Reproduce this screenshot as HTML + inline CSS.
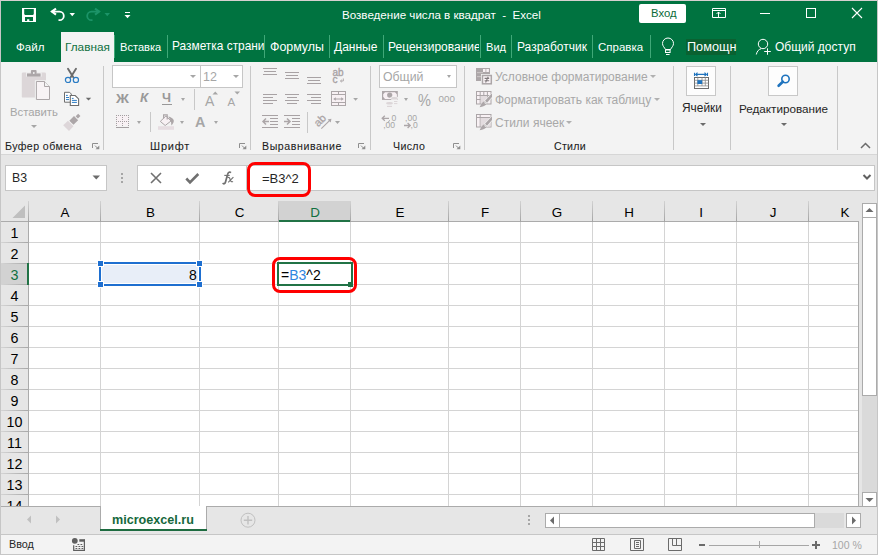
<!DOCTYPE html>
<html><head><meta charset="utf-8">
<style>
*{box-sizing:border-box;margin:0;padding:0}
html,body{width:878px;height:555px;overflow:hidden;background:#fff}
body{position:relative;font-family:"Liberation Sans",sans-serif;font-size:12px;color:#262626}
.a{position:absolute}
.t{position:absolute;white-space:nowrap;line-height:1}
#title{left:0;top:0;width:878px;height:62px;background:#007340;border-top:1px solid #d6d0d0;border-left:1px solid #c6c6c6;border-right:1px solid #c6c6c6}
.wt{color:#fff}
.sep{position:absolute;top:35px;width:1px;height:23px;background:#40a878}
#ribbon{left:0;top:62px;width:878px;height:93px;background:#f3f3f3;border-left:1px solid #c6c6c6;border-right:1px solid #c6c6c6;border-bottom:1px solid #d6d6d6}
.gsep{position:absolute;top:66px;width:1px;height:84px;background:#c8c8c8}
.glab{color:#1c1c1c;font-size:11.3px;-webkit-text-stroke:0.08px #1c1c1c}
.dis{color:#a6a6a6}
.arr{position:absolute;width:0;height:0;border-left:2.5px solid transparent;border-right:2.5px solid transparent;border-top:3px solid #a6a6a6}
#fbar{left:0;top:155px;width:878px;height:47px;background:#e6e6e6;border-left:1px solid #c6c6c6;border-right:1px solid #c6c6c6}
</style></head><body>
<!-- TITLE BAR -->
<div id="title" class="a"></div>
<!-- save icon -->
<svg class="a" style="left:22px;top:8px" width="14" height="14" viewBox="0 0 14 14">
<path fill="#fff" fill-rule="evenodd" d="M0 0H14V14H0Z M2.2 1.1H11.8V6L11 6.9H3L2.2 6Z M3 9.1H11V12.9H7.3V11.3H5.1V12.9H3Z"/>
</svg>
<!-- undo -->
<svg class="a" style="left:48px;top:5px" width="20" height="18" viewBox="0 0 20 18">
<path d="M8 3.6 L3.9 6.6 L8 9.6" fill="none" stroke="#fff" stroke-width="2.1"/>
<path d="M3.6 6.6 H11.5 A4.3 4.3 0 0 1 11.5 15.2 H10.5" fill="none" stroke="#fff" stroke-width="1.8"/>
</svg>
<svg class="a" style="left:69px;top:13px" width="7" height="4" viewBox="0 0 7 4"><path d="M0.5 0 H6 L3.25 3.2Z" fill="#fff"/></svg>
<!-- redo -->
<svg class="a" style="left:83px;top:5px" width="20" height="18" viewBox="0 0 20 18">
<path d="M12 3.6 L16.1 6.6 L12 9.6" fill="none" stroke="#1c9468" stroke-width="2.1"/>
<path d="M16.4 6.6 H8.5 A4.3 4.3 0 0 0 8.5 15.2 H9.5" fill="none" stroke="#1c9468" stroke-width="1.8"/>
</svg>
<svg class="a" style="left:104px;top:13px" width="7" height="4" viewBox="0 0 7 4"><path d="M0.5 0 H6 L3.25 3.2Z" fill="#1c9468"/></svg>
<!-- customize qat -->
<div class="a" style="left:125px;top:12px;width:5px;height:1px;background:#fff"></div>
<svg class="a" style="left:124px;top:15px" width="7" height="4" viewBox="0 0 7 4"><path d="M0.5 0 H6.5 L3.5 3.2Z" fill="#fff"/></svg>
<!-- ribbon display options -->
<svg class="a" style="left:711px;top:7px" width="16" height="12" viewBox="0 0 16 12">
<path d="M1.5 1.5 H14.5 V10.5 H1.5Z M1.5 3.5 H14.5 M7.5 10.5 V5 M5.5 7 L7.5 5 L9.5 7" fill="none" stroke="#fff" stroke-width="1"/>
</svg>
<!-- min max close -->
<div class="a" style="left:760px;top:13px;width:10px;height:1px;background:#fff"></div>
<div class="a" style="left:806px;top:8px;width:10px;height:10px;border:1px solid #fff"></div>
<svg class="a" style="left:851px;top:7px" width="12" height="12" viewBox="0 0 12 12"><path d="M1 1 L11 11 M11 1 L1 11" stroke="#fff" stroke-width="1.1"/></svg>
<!-- bulb -->
<svg class="a" style="left:660px;top:37px" width="16" height="20" viewBox="0 0 16 20">
<path d="M5.5 12.5 C4.5 10.5 2.5 9 2.5 6.5 A5.5 5.5 0 0 1 13.5 6.5 C13.5 9 11.5 10.5 10.5 12.5 Z" fill="none" stroke="#fff" stroke-width="1"/>
<rect x="5.5" y="13" width="4.6" height="2.5" fill="none" stroke="#fff" stroke-width="1"/>
<rect x="6" y="17" width="3.6" height="1" fill="#fff"/>
</svg>
<!-- person -->
<svg class="a" style="left:754px;top:37px" width="20" height="20" viewBox="0 0 20 20">
<circle cx="9" cy="7" r="4.7" fill="none" stroke="#fff" stroke-width="1"/>
<path d="M2.3 17.5 C3 14 5 12.3 7 11.8" fill="none" stroke="#fff" stroke-width="1"/>
<path d="M13.5 11.3 V17.8 M10.2 14.5 H16.8" stroke="#fff" stroke-width="1"/>
</svg>
<div class="t wt" style="left:342px;top:9px;font-size:11.6px">Возведение числа в квадрат &nbsp;- &nbsp;Excel</div>
<div class="a" style="left:639px;top:4px;width:47px;height:19px;background:#fff;border-radius:2px"></div>
<div class="t" style="left:651px;top:8px;color:#0b6b3a;font-size:11.3px">Вход</div>
<!-- tabs -->
<div class="t wt" style="left:16px;top:41.4px;font-size:11.6px">Файл</div>
<div class="a" style="left:61px;top:32px;width:53px;height:30px;background:#f3f3f3"></div>
<div class="t" style="left:65px;top:41.5px;font-size:11.8px;color:#0f7040">Главная</div>
<div class="sep" style="left:114px"></div>
<div class="t wt" style="left:120px;top:41.8px;font-size:11.1px">Вставка</div>
<div class="sep" style="left:167px"></div>
<div class="t wt" style="left:172px;top:41px;font-size:11.9px">Разметка страни</div>
<div class="sep" style="left:264px"></div>
<div class="t wt" style="left:270px;top:40.7px;font-size:12.4px">Формулы</div>
<div class="sep" style="left:329px"></div>
<div class="t wt" style="left:334px;top:41px">Данные</div>
<div class="sep" style="left:383px"></div>
<div class="t wt" style="left:388px;top:41px;width:91px;overflow:hidden">Рецензирование</div>
<div class="sep" style="left:480px"></div>
<div class="t wt" style="left:486px;top:41.8px;font-size:11.1px">Вид</div>
<div class="sep" style="left:511px"></div>
<div class="t wt" style="left:517px;top:41px">Разработчик</div>
<div class="sep" style="left:592px"></div>
<div class="t wt" style="left:598px;top:41.5px;font-size:11.5px">Справка</div>
<div class="sep" style="left:650px"></div>
<div class="a" style="left:686px;top:39px;width:50px;height:16px;background:#0a6131"></div>
<div class="t wt" style="left:687px;top:41px;font-size:12.7px">Помощн</div>
<div class="t wt" style="left:775px;top:41px">Общий доступ</div>

<!-- RIBBON -->
<div id="ribbon" class="a"></div>

<!-- clipboard group -->
<svg class="a" style="left:20px;top:68px" width="32" height="34" viewBox="0 0 32 34">
<rect x="1.8" y="4.6" width="24.2" height="25" rx="1.2" fill="#dcd6d8"/>
<rect x="6" y="4.4" width="15.6" height="4.2" fill="#f3f3f3"/>
<rect x="6.9" y="5.4" width="13.7" height="3.2" fill="#aca6a8"/>
<rect x="10.9" y="2.1" width="5.7" height="4" rx="1" fill="#aca6a8"/>
<circle cx="13.8" cy="5" r="0.9" fill="#f3f3f3"/>
<path d="M14.9 12.2 H25.5 L31 17.5 V32.9 H14.9Z" fill="#f3f3f3"/>
<path d="M16.4 13.5 H24.5 L29.5 18.5 V31.5 H16.4Z" fill="#f8f3f5" stroke="#aca6a8" stroke-width="1"/>
<path d="M24.5 13.5 V18.5 H29.5" fill="#f3f3f3" stroke="#aca6a8" stroke-width="1"/>
</svg>
<div class="t dis" style="left:10px;top:106.5px;font-size:11.3px;color:#a6a6a6">Вставить</div>
<div class="arr" style="left:31px;top:125px;border-left-width:3px;border-right-width:3px;border-top-width:3px"></div>
<!-- cut -->
<svg class="a" style="left:63px;top:66px" width="18" height="18" viewBox="0 0 18 18">
<path d="M5 2.8 L10.3 11.3 M13 2.8 L7.7 11.3" stroke="#6b6b6b" stroke-width="1.9" stroke-linecap="round"/>
<circle cx="5" cy="13.9" r="2.6" fill="#f3f3f3" stroke="#2b7cc4" stroke-width="1.2"/>
<circle cx="12.9" cy="13.9" r="2.6" fill="#f3f3f3" stroke="#2b7cc4" stroke-width="1.2"/>
</svg>
<!-- copy -->
<svg class="a" style="left:63px;top:91px" width="18" height="17" viewBox="0 0 18 17">
<path d="M1.5 1.3 H6.6 L8.3 3 V11.2 H1.5Z" fill="#fff" stroke="#6d6d6d" stroke-width="1"/>
<path d="M3 4.4 H4.8 M3 6.5 H6 M3 8.6 H6" stroke="#2b7cc4" stroke-width="1"/>
<path d="M7.3 4.5 H12.2 L15.6 7.9 V14.5 H7.3Z" fill="#fff" stroke="#6d6d6d" stroke-width="1.1"/>
<path d="M8.9 7.4 H10.6 M8.9 9.4 H13.9 M8.9 11.4 H13.9" stroke="#2b7cc4" stroke-width="1"/>
</svg>
<svg class="a" style="left:85px;top:97px" width="7" height="4" viewBox="0 0 7 4"><path d="M0.8 0.8 H6.2 L3.5 3.6Z" fill="#6b6b6b"/></svg>
<!-- format painter -->
<svg class="a" style="left:61px;top:112px" width="22" height="20" viewBox="0 0 22 20">
<g transform="translate(11.6,9.6) rotate(45)">
<rect x="-1.6" y="-9.5" width="3.2" height="3.6" fill="#aca6a8"/>
<rect x="-2.9" y="-4.9" width="5.8" height="6.6" fill="#aca6a8"/>
<path d="M-3.9 2.7 H3.9 L4.1 9.2 H-4.1Z" fill="#ddd6d9"/>
</g>
</svg>
<div class="t glab" style="left:5px;top:141.3px;font-size:10.6px;letter-spacing:0.42px">Буфер обмена</div>
<svg class="a" style="left:91px;top:142px" width="10" height="10" viewBox="0 0 10 10"><path d="M1.5 6 V1.5 H7" fill="none" stroke="#8e8e8e" stroke-width="1"/><path d="M8.3 3.5 V7.3 H4.5Z" fill="#8e8e8e"/><path d="M4 3.6 L6.5 6.1" stroke="#8e8e8e" stroke-width="1"/></svg>
<div class="gsep" style="left:103px"></div>
<!-- font group -->
<div class="a" style="left:112px;top:65px;width:89px;height:23px;background:#fff;border:1px solid #c6c6c6"></div>
<div class="a" style="left:200px;top:65px;width:43px;height:23px;background:#fff;border:1px solid #c6c6c6"></div>
<div class="arr" style="left:190px;top:75px;border-left-width:3px;border-right-width:3px;border-top-width:3px"></div>
<div class="t" style="left:203px;top:71px;font-size:12.5px;color:#a6a6a6">12</div>
<div class="arr" style="left:233px;top:75px;border-left-width:3px;border-right-width:3px;border-top-width:3px"></div>
<div class="t" style="left:116px;top:92px;font-size:13px;font-weight:700;color:#999;transform:scaleX(1.1);transform-origin:0 0">Ж</div>
<div class="t" style="left:140px;top:91.3px;font-size:13.4px;font-weight:700;font-style:italic;color:#999">К</div>
<div class="t" style="left:162px;top:91.5px;font-size:12.8px;font-weight:700;color:#999">Ч</div>
<div class="a" style="left:162px;top:104px;width:10px;height:1px;background:#999"></div>
<div class="arr" style="left:181px;top:98px;border-left-width:2.5px;border-right-width:2.5px;border-top-width:3px"></div>
<div class="a" style="left:194px;top:89px;width:1px;height:21px;background:#c8c8c8"></div>
<div class="t" style="left:205px;top:94px;font-size:14px;color:#a6a6a6">A</div>
<svg class="a" style="left:212px;top:91px" width="7" height="4" viewBox="0 0 7 4"><path d="M0.5 3.5 H6 L3.25 0.5Z" fill="#a6a6a6"/></svg>
<div class="t" style="left:227.5px;top:96.5px;font-size:11.5px;color:#a6a6a6">A</div>
<svg class="a" style="left:234px;top:91px" width="7" height="4" viewBox="0 0 7 4"><path d="M0.5 0.5 H6 L3.25 3.5Z" fill="#a6a6a6"/></svg>
<!-- borders -->
<svg class="a" style="left:115px;top:114px" width="16" height="16" viewBox="0 0 16 16">
<rect x="1.4" y="1.5" width="12" height="10" fill="#f8f1f4"/>
<g fill="#a49fa1">
<rect x="1" y="1" width="1" height="1"/><rect x="3" y="1" width="1" height="1"/><rect x="5" y="1" width="1" height="1"/><rect x="7" y="1" width="1" height="1"/><rect x="9" y="1" width="1" height="1"/><rect x="11" y="1" width="1" height="1"/><rect x="13" y="1" width="1" height="1"/>
<rect x="1" y="7" width="1" height="1"/><rect x="3" y="7" width="1" height="1"/><rect x="5" y="7" width="1" height="1"/><rect x="7" y="7" width="1" height="1"/><rect x="9" y="7" width="1" height="1"/><rect x="11" y="7" width="1" height="1"/><rect x="13" y="7" width="1" height="1"/>
<rect x="1" y="3" width="1" height="1"/><rect x="1" y="5" width="1" height="1"/><rect x="1" y="9" width="1" height="1"/><rect x="1" y="11" width="1" height="1"/>
<rect x="7" y="3" width="1" height="1"/><rect x="7" y="5" width="1" height="1"/><rect x="7" y="9" width="1" height="1"/><rect x="7" y="11" width="1" height="1"/>
<rect x="13" y="3" width="1" height="1"/><rect x="13" y="5" width="1" height="1"/><rect x="13" y="9" width="1" height="1"/><rect x="13" y="11" width="1" height="1"/>
<rect x="1" y="13" width="13" height="1"/>
</g>
</svg>
<div class="arr" style="left:137px;top:121px;border-left-width:2.5px;border-right-width:2.5px;border-top-width:3px"></div>
<div class="a" style="left:150px;top:112px;width:1px;height:20px;background:#c8c8c8"></div>
<!-- fill color -->
<svg class="a" style="left:157px;top:113px" width="18" height="18" viewBox="0 0 18 18">
<path d="M3.3 8.4 L9 2.9 L14 8 L8.2 12.5Z" fill="#f8f1f4" stroke="#aca6a8" stroke-width="1"/>
<path d="M6.6 5.6 V1.9 H10.2 V6.6" fill="none" stroke="#aca6a8" stroke-width="1.2"/>
<path d="M11.3 3.6 C13.8 4.2 16.3 5.4 16.8 7.6 C17 9.6 15.5 11.5 14.4 12.4 L13.9 7.9Z" fill="#aca6a8"/>
<rect x="1" y="13.2" width="16" height="3.6" fill="#e6dde1"/>
</svg>
<div class="arr" style="left:180px;top:121px;border-left-width:2.5px;border-right-width:2.5px;border-top-width:3px"></div>
<div class="t" style="left:195px;top:115px;font-size:14.4px;font-weight:700;color:#a6a6a6">A</div>
<div class="arr" style="left:214px;top:121px;border-left-width:2.5px;border-right-width:2.5px;border-top-width:3px"></div>
<div class="t glab" style="left:150px;top:141px;font-size:11px;letter-spacing:0.8px">Шрифт</div>
<svg class="a" style="left:238px;top:142px" width="10" height="10" viewBox="0 0 10 10"><path d="M1.5 6 V1.5 H7" fill="none" stroke="#8e8e8e" stroke-width="1"/><path d="M8.3 3.5 V7.3 H4.5Z" fill="#8e8e8e"/><path d="M4 3.6 L6.5 6.1" stroke="#8e8e8e" stroke-width="1"/></svg>
<div class="gsep" style="left:250px"></div>
<!-- alignment group -->
<svg class="a" style="left:258px;top:64px" width="112" height="70" viewBox="0 0 112 70">
<g fill="#a8a2a4">
<rect x="5" y="4" width="14" height="1"/><rect x="6" y="7" width="12" height="1"/><rect x="5" y="10" width="14" height="1"/>
<rect x="27" y="8" width="14" height="1"/><rect x="28" y="11" width="12" height="1"/><rect x="27" y="14" width="14" height="1"/>
<rect x="49" y="13" width="14" height="1"/><rect x="50" y="16" width="12" height="1"/><rect x="49" y="19" width="14" height="1"/>
<rect x="5" y="30" width="14" height="1"/><rect x="5" y="33" width="10" height="1"/><rect x="5" y="36" width="14" height="1"/><rect x="5" y="39" width="10" height="1"/>
<rect x="27" y="30" width="14" height="1"/><rect x="29" y="33" width="10" height="1"/><rect x="27" y="36" width="14" height="1"/><rect x="29" y="39" width="10" height="1"/>
<rect x="49" y="30" width="14" height="1"/><rect x="53" y="33" width="10" height="1"/><rect x="49" y="36" width="14" height="1"/><rect x="53" y="39" width="10" height="1"/>
<!-- indent -->
<rect x="4" y="51" width="16" height="1"/><rect x="12" y="54" width="8" height="1"/><rect x="12" y="57" width="8" height="1"/><rect x="12" y="60" width="8" height="1"/><rect x="4" y="63" width="16" height="1"/>
<rect x="26" y="51" width="16" height="1"/><rect x="34" y="54" width="8" height="1"/><rect x="34" y="57" width="8" height="1"/><rect x="34" y="60" width="8" height="1"/><rect x="26" y="63" width="16" height="1"/>
</g>
<rect x="49" y="48" width="1" height="21" fill="#c8c8c8"/>
<path d="M5 57.5 H11 M8 54.5 L5 57.5 L8 60.5" fill="none" stroke="#aca6a8" stroke-width="1.5"/>
<path d="M26 57.5 H32 M29 54.5 L32 57.5 L29 60.5" fill="none" stroke="#aca6a8" stroke-width="1.5"/>
<!-- wrap -->
<text x="74.4" y="11.8" font-family="Liberation Sans" font-size="10" fill="#a8a2a4" stroke="#a8a2a4" stroke-width="0.35">ab</text>
<text x="74.6" y="18.8" font-family="Liberation Sans" font-size="10" fill="#a8a2a4" stroke="#a8a2a4" stroke-width="0.35">c</text>
<path d="M85.3 14.5 V17 H82.5 M83.8 15.8 L82.5 17 L83.8 18.2" fill="none" stroke="#a8a2a4" stroke-width="0.9"/>
<!-- merge -->
<rect x="73.5" y="27.5" width="14" height="14" fill="#f8f1f4" stroke="#aca6a8" stroke-width="1"/>
<path d="M73.5 30.5 H87.5 M73.5 38.5 H87.5 M80.5 27.5 V30.5 M80.5 38.5 V41.5" fill="none" stroke="#aca6a8" stroke-width="1"/>
<path d="M77 35 H84" stroke="#aca6a8" stroke-width="1"/>
<path d="M75.2 35 L77.8 33.2 V36.8Z M85.8 35 L83.2 33.2 V36.8Z" fill="#aca6a8"/>
<path d="M95.2 34 H100 L97.6 36.8Z" fill="#a6a6a6"/>
<!-- orientation -->
<text x="0" y="0" font-family="Liberation Sans" font-size="10.8" fill="#aca6a8" stroke="#aca6a8" stroke-width="0.3" transform="translate(60.2,63.2) rotate(-45)">ab</text>
<path d="M63.3 64.6 L72.8 55.3" fill="none" stroke="#aca6a8" stroke-width="1.1"/>
<path d="M73.4 54.7 L69.6 55.4 L72.7 58.5Z" fill="#aca6a8"/>
<path d="M77 57 H82 L79.5 60Z" fill="#a6a6a6"/>
</svg>
<div class="t glab" style="left:262px;top:141.3px;font-size:10.6px;letter-spacing:0.59px">Выравнивание</div>
<svg class="a" style="left:357px;top:142px" width="10" height="10" viewBox="0 0 10 10"><path d="M1.5 6 V1.5 H7" fill="none" stroke="#8e8e8e" stroke-width="1"/><path d="M8.3 3.5 V7.3 H4.5Z" fill="#8e8e8e"/><path d="M4 3.6 L6.5 6.1" stroke="#8e8e8e" stroke-width="1"/></svg>
<div class="gsep" style="left:370px"></div>
<!-- number group -->
<div class="a" style="left:379px;top:65px;width:78px;height:23px;background:#fff;border:1px solid #c6c6c6"></div>
<div class="t" style="left:383px;top:71px;font-size:12.3px;color:#a6a6a6">Общий</div>
<div class="arr" style="left:447px;top:75px;border-left-width:2.5px;border-right-width:2.5px;border-top-width:3px"></div>
<svg class="a" style="left:381px;top:90px" width="20" height="19" viewBox="0 0 20 19">
<rect x="1" y="1" width="15.8" height="8.9" fill="#aca6a8"/>
<path d="M2.2 4.2 L4 2.3 H14 L15.9 4.2 V6.8 L14 8.9 H4 L2.2 6.8Z" fill="#f8f1f4"/>
<circle cx="8.7" cy="5.1" r="2.6" fill="#aca6a8"/>
<ellipse cx="13.4" cy="8.2" rx="3.9" ry="1.9" fill="#f3f3f3"/>
<ellipse cx="13.4" cy="8.2" rx="3.4" ry="1.3" fill="#dcd6d8"/>
<path d="M13 11.5 H16.4 M13 13.6 H16.4" stroke="#dcd6d8" stroke-width="1"/>
<ellipse cx="8.5" cy="13.3" rx="3.4" ry="1.3" fill="#dcd6d8"/>
<path d="M6 16.4 H11" stroke="#dcd6d8" stroke-width="1.2"/>
</svg>
<div class="arr" style="left:404px;top:98px;border-left-width:2.5px;border-right-width:2.5px;border-top-width:3px"></div>
<div class="t" style="left:418px;top:91.5px;font-size:16.5px;color:#a6a6a6;transform:scaleX(0.88);transform-origin:0 0">%</div>
<div class="t" style="left:438.5px;top:94px;font-size:9.8px;color:#a6a6a6;letter-spacing:0.1px">000</div>
<svg class="a" style="left:380px;top:113px" width="42" height="18" viewBox="0 0 42 18">
<path d="M2.2 5.3 H9 M4.8 2.8 L2.2 5.3 L4.8 7.8" fill="none" stroke="#aca6a8" stroke-width="1.3"/>
<text x="11.4" y="8" font-family="Liberation Sans" font-size="8.6" fill="#a6a6a6">0</text>
<text x="3.2" y="15" font-family="Liberation Sans" font-size="8.6" fill="#a6a6a6">,00</text>
<path d="M9.6 7.2 L8.4 9.2" stroke="#a6a6a6" stroke-width="1"/>
<text x="25" y="8" font-family="Liberation Sans" font-size="8.6" fill="#a6a6a6">,00</text>
<path d="M24 12.5 H30 M27.6 10 L30.2 12.5 L27.6 15" fill="none" stroke="#aca6a8" stroke-width="1.3"/>
<text x="30.6" y="15" font-family="Liberation Sans" font-size="8.6" fill="#a6a6a6">,0</text>
</svg>
<div class="t glab" style="left:393px;top:141.3px;font-size:10.6px;letter-spacing:0.35px">Число</div>
<svg class="a" style="left:452px;top:142px" width="10" height="10" viewBox="0 0 10 10"><path d="M1.5 6 V1.5 H7" fill="none" stroke="#8e8e8e" stroke-width="1"/><path d="M8.3 3.5 V7.3 H4.5Z" fill="#8e8e8e"/><path d="M4 3.6 L6.5 6.1" stroke="#8e8e8e" stroke-width="1"/></svg>
<div class="gsep" style="left:464px"></div>
<!-- styles group -->
<svg class="a" style="left:475px;top:67px" width="18" height="18" viewBox="0 0 18 18">
<rect x="1" y="1" width="14" height="13" fill="#aca6a8"/>
<rect x="8" y="2" width="2.5" height="3" fill="#f8f1f4"/><rect x="11.3" y="2" width="2.6" height="3" fill="#f8f1f4"/>
<rect x="2" y="5.4" width="6" height="0.7" fill="#dcd6d8"/><rect x="2" y="9.4" width="6" height="0.7" fill="#dcd6d8"/>
<rect x="6" y="7" width="12" height="11" fill="#f3f3f3"/>
<rect x="7.5" y="8.5" width="8.8" height="8.3" fill="#faf3f6" stroke="#aca6a8" stroke-width="1.5"/>
<path d="M9.6 11.4 H14.2 M9.6 13.8 H14.2 M13.2 9.8 L10.6 15.4" stroke="#7f797b" stroke-width="1.1"/>
</svg>
<div class="t" style="left:495px;top:71px;font-size:12px;color:#a8a8a8">Условное форматирование</div>
<div class="arr" style="left:650px;top:75px;border-left-width:3px;border-right-width:3px;border-top-width:3px;border-top-color:#b0b0b0"></div>
<svg class="a" style="left:475px;top:90px" width="18" height="18" viewBox="0 0 18 18">
<rect x="1.5" y="1.5" width="14.5" height="12.5" fill="#f8f1f4" stroke="#aca6a8" stroke-width="1"/>
<path d="M1.5 5.5 H16 M1.5 9.5 H16 M5.2 1.5 V14 M8.8 1.5 V14 M12.4 1.5 V14" stroke="#aca6a8" stroke-width="1"/>
<rect x="5.7" y="6" width="6.2" height="7.5" fill="#e3dcdf"/>
<path d="M17.5 2 L8.5 11.5 L11.5 14.5 L17.5 7.5Z" fill="#f3f3f3"/>
<path d="M17 3.2 L10 10.8 L12 12.8 L17 7Z" fill="#aca6a8"/>
<path d="M9.2 11.3 C7.5 12 6.3 14.2 4.6 17.3 C8 17 10.6 15.6 11.8 13.8Z" fill="#aca6a8"/>
<path d="M9.3 12.6 C10 12.6 10.6 13.2 10.6 13.9" fill="none" stroke="#f3f3f3" stroke-width="0.8"/>
</svg>
<div class="t" style="left:495px;top:94px;font-size:12px;color:#a8a8a8">Форматировать как таблицу</div>
<div class="arr" style="left:654px;top:98px;border-left-width:3px;border-right-width:3px;border-top-width:3px;border-top-color:#b0b0b0"></div>
<svg class="a" style="left:475px;top:113px" width="18" height="18" viewBox="0 0 18 18">
<rect x="1.5" y="1.5" width="14.5" height="12.5" fill="#f8f1f4" stroke="#aca6a8" stroke-width="1"/>
<path d="M1.5 4.5 H16 M5.2 1.5 V14" stroke="#aca6a8" stroke-width="1"/>
<rect x="5.7" y="5" width="10" height="8.5" fill="#e3dcdf"/>
<path d="M17.5 2 L8.5 11.5 L11.5 14.5 L17.5 7.5Z" fill="#f3f3f3"/>
<path d="M17 3.2 L10 10.8 L12 12.8 L17 7Z" fill="#aca6a8"/>
<path d="M9.2 11.3 C7.5 12 6.3 14.2 4.6 17.3 C8 17 10.6 15.6 11.8 13.8Z" fill="#aca6a8"/>
<path d="M9.3 12.6 C10 12.6 10.6 13.2 10.6 13.9" fill="none" stroke="#f3f3f3" stroke-width="0.8"/>
</svg>
<div class="t" style="left:495px;top:117px;font-size:12px;color:#a8a8a8">Стили ячеек</div>
<div class="arr" style="left:566px;top:121px;border-left-width:3px;border-right-width:3px;border-top-width:3px;border-top-color:#b0b0b0"></div>
<div class="t glab" style="left:554px;top:141.3px;font-size:10.6px;letter-spacing:0.3px">Стили</div>
<div class="gsep" style="left:673px"></div>
<!-- cells -->
<div class="a" style="left:686px;top:66px;width:30px;height:30px;background:#fdfdfd;border:1px solid #c8c8c8"></div>
<svg class="a" style="left:692px;top:71px" width="18" height="20" viewBox="0 0 18 20">
<path d="M2.5 1.8 V5 M15.5 1.8 V5 M3.5 3.4 H14.5 M5.5 1.6 L3.6 3.4 L5.5 5.2 M12.5 1.6 L14.4 3.4 L12.5 5.2" fill="none" stroke="#1e73be" stroke-width="1.1"/>
<rect x="2.5" y="6.5" width="14" height="11" fill="#fff" stroke="#6d6d6d" stroke-width="1"/>
<path d="M2.5 9.3 H16.5 M2.5 12.1 H16.5 M2.5 14.9 H16.5 M5.8 6.5 V14.9 M10 6.5 V14.9 M13.3 6.5 V14.9" stroke="#8a8a8a" stroke-width="0.8"/>
<rect x="5.4" y="9.2" width="4.8" height="3.8" fill="#1e73be"/>
</svg>
<div class="t" style="left:682px;top:103px;font-size:11.9px;color:#262626">Ячейки</div>
<div class="arr" style="left:700px;top:123px;border-left-width:3px;border-right-width:3px;border-top-width:3px;border-top-color:#6b6b6b"></div>
<div class="gsep" style="left:730px"></div>
<!-- editing -->
<div class="a" style="left:768px;top:66px;width:30px;height:30px;background:#fdfdfd;border:1px solid #c8c8c8"></div>
<svg class="a" style="left:776px;top:73px" width="16" height="16" viewBox="0 0 16 16">
<circle cx="9.5" cy="6" r="3.7" fill="none" stroke="#1e73be" stroke-width="1.6"/>
<path d="M6.8 8.7 L2.6 12.8" stroke="#1e73be" stroke-width="2.6" stroke-linecap="round"/>
</svg>
<div class="t" style="left:739px;top:103px;font-size:11.7px;color:#262626">Редактирование</div>
<div class="arr" style="left:781px;top:123px;border-left-width:3px;border-right-width:3px;border-top-width:3px;border-top-color:#6b6b6b"></div>
<div class="gsep" style="left:837px"></div>
<svg class="a" style="left:860px;top:142px" width="11" height="7" viewBox="0 0 11 7"><path d="M1 6 L5.5 1.5 L10 6" fill="none" stroke="#6b6b6b" stroke-width="1.5"/></svg>
<!-- FORMULA BAR AREA -->
<div id="fbar" class="a"></div>

<!-- FORMULA BAR -->
<div class="a" style="left:5px;top:165px;width:102px;height:26px;background:#fff;border:1px solid #c6c6c6"></div>
<div class="t" style="left:12px;top:172px;font-size:12.3px;color:#262626">B3</div>
<svg class="a" style="left:92px;top:175px" width="9" height="5" viewBox="0 0 9 5"><path d="M0.5 0.5 H8 L4.25 4.5Z" fill="#6b6b6b"/></svg>
<div class="a" style="left:121px;top:173px;width:2px;height:2px;background:#a6a6a6"></div>
<div class="a" style="left:121px;top:177px;width:2px;height:2px;background:#a6a6a6"></div>
<div class="a" style="left:121px;top:181px;width:2px;height:2px;background:#a6a6a6"></div>
<div class="a" style="left:137px;top:165px;width:110px;height:26px;background:#fff;border:1px solid #c6c6c6"></div>
<div class="a" style="left:246px;top:165px;width:629px;height:26px;background:#fff;border:1px solid #c6c6c6"></div>
<svg class="a" style="left:149px;top:172px" width="14" height="12" viewBox="0 0 14 12"><path d="M2 1 L12 11 M12 1 L2 11" stroke="#707070" stroke-width="1.6"/></svg>
<svg class="a" style="left:184px;top:172px" width="16" height="13" viewBox="0 0 16 13"><path d="M2.3 6.5 L6 10.3 L14.3 2" fill="none" stroke="#707070" stroke-width="2.6"/></svg>
<svg class="a" style="left:220px;top:170px" width="16" height="16" viewBox="0 0 16 16">
<path d="M11 2.6 C9.8 1.7 8.2 2 7.6 4.4 L5.5 12 C5 13.9 3.7 14.2 2.6 13.2" fill="none" stroke="#707070" stroke-width="1.75"/>
<path d="M4.3 5.4 H9.7" stroke="#707070" stroke-width="1.1"/>
<path d="M7.4 7.6 C8.6 6.9 9.6 7.4 10.1 9.3 C10.6 11.5 11.6 12.3 13 11.4" fill="none" stroke="#707070" stroke-width="1.2"/>
<path d="M13.4 7.2 L8.2 12.3" stroke="#707070" stroke-width="1.1"/>
</svg>
<div class="t" style="left:262px;top:172px;font-size:13px;color:#262626">=B3^2</div>
<svg class="a" style="left:862px;top:173px" width="10" height="8" viewBox="0 0 10 8"><path d="M1.5 2 L5 5.5 L8.5 2" fill="none" stroke="#606060" stroke-width="2"/></svg>
<!-- red annotation 1 -->
<div class="a" style="left:247px;top:162px;width:64px;height:35px;border:3.2px solid #ff0000;border-radius:8px"></div>

<!-- GRID -->
<div class="a" style="left:0;top:201px;width:878px;height:306px;background:#fff"></div>
<div class="a" style="left:1px;top:201px;width:858px;height:21px;background:#e6e6e6;border-bottom:1px solid #ababab"></div>
<div class="a" style="left:1px;top:222px;width:27px;height:285px;background:#e6e6e6"></div>
<div class="a" style="left:0;top:154px;width:1px;height:401px;background:#c6c6c6"></div>
<svg class="a" style="left:12px;top:205px" width="14" height="14" viewBox="0 0 14 14"><path d="M13 0.5 V13 H0.5Z" fill="#bfbfbf"/></svg>

<div class="a" style="left:278px;top:201px;width:72px;height:21px;background:#d2d2d2"></div>
<div class="a" style="left:278px;top:220px;width:73px;height:2px;background:#217346"></div>
<div class="a" style="left:28px;top:201px;width:1px;height:21px;background:linear-gradient(#d2d2d2,#a3a3a3)"></div>
<div class="a" style="left:100px;top:201px;width:1px;height:21px;background:linear-gradient(#d2d2d2,#a3a3a3)"></div>
<div class="a" style="left:199px;top:201px;width:1px;height:21px;background:linear-gradient(#d2d2d2,#a3a3a3)"></div>
<div class="a" style="left:278px;top:201px;width:1px;height:21px;background:linear-gradient(#d2d2d2,#a3a3a3)"></div>
<div class="a" style="left:350px;top:201px;width:1px;height:21px;background:linear-gradient(#d2d2d2,#a3a3a3)"></div>
<div class="a" style="left:448px;top:201px;width:1px;height:21px;background:linear-gradient(#d2d2d2,#a3a3a3)"></div>
<div class="a" style="left:520px;top:201px;width:1px;height:21px;background:linear-gradient(#d2d2d2,#a3a3a3)"></div>
<div class="a" style="left:592px;top:201px;width:1px;height:21px;background:linear-gradient(#d2d2d2,#a3a3a3)"></div>
<div class="a" style="left:664px;top:201px;width:1px;height:21px;background:linear-gradient(#d2d2d2,#a3a3a3)"></div>
<div class="a" style="left:736px;top:201px;width:1px;height:21px;background:linear-gradient(#d2d2d2,#a3a3a3)"></div>
<div class="a" style="left:808px;top:201px;width:1px;height:21px;background:linear-gradient(#d2d2d2,#a3a3a3)"></div>
<div class="t" style="left:28px;top:206px;width:72px;padding-left:2px;text-align:center;font-size:13.4px;color:#000">A</div>
<div class="t" style="left:100px;top:206px;width:99px;padding-left:2px;text-align:center;font-size:13.4px;color:#000">B</div>
<div class="t" style="left:199px;top:206px;width:79px;padding-left:2px;text-align:center;font-size:13.4px;color:#000">C</div>
<div class="t" style="left:278px;top:206px;width:72px;padding-left:2px;text-align:center;font-size:13.4px;color:#107040">D</div>
<div class="t" style="left:350px;top:206px;width:98px;padding-left:2px;text-align:center;font-size:13.4px;color:#000">E</div>
<div class="t" style="left:448px;top:206px;width:72px;padding-left:2px;text-align:center;font-size:13.4px;color:#000">F</div>
<div class="t" style="left:520px;top:206px;width:72px;padding-left:2px;text-align:center;font-size:13.4px;color:#000">G</div>
<div class="t" style="left:592px;top:206px;width:72px;padding-left:2px;text-align:center;font-size:13.4px;color:#000">H</div>
<div class="t" style="left:664px;top:206px;width:72px;padding-left:2px;text-align:center;font-size:13.4px;color:#000">I</div>
<div class="t" style="left:736px;top:206px;width:72px;padding-left:2px;text-align:center;font-size:13.4px;color:#000">J</div>
<div class="t" style="left:808px;top:206px;width:72px;padding-left:2px;text-align:center;font-size:13.4px;color:#000">K</div>
<div class="a" style="left:100px;top:222px;width:1px;height:285px;background:#d4d4d4"></div>
<div class="a" style="left:199px;top:222px;width:1px;height:285px;background:#d4d4d4"></div>
<div class="a" style="left:278px;top:222px;width:1px;height:285px;background:#d4d4d4"></div>
<div class="a" style="left:350px;top:222px;width:1px;height:285px;background:#d4d4d4"></div>
<div class="a" style="left:448px;top:222px;width:1px;height:285px;background:#d4d4d4"></div>
<div class="a" style="left:520px;top:222px;width:1px;height:285px;background:#d4d4d4"></div>
<div class="a" style="left:592px;top:222px;width:1px;height:285px;background:#d4d4d4"></div>
<div class="a" style="left:664px;top:222px;width:1px;height:285px;background:#d4d4d4"></div>
<div class="a" style="left:736px;top:222px;width:1px;height:285px;background:#d4d4d4"></div>
<div class="a" style="left:808px;top:222px;width:1px;height:285px;background:#d4d4d4"></div>
<div class="a" style="left:29px;top:242px;width:830px;height:1px;background:#d4d4d4"></div>
<div class="a" style="left:1px;top:242px;width:27px;height:1px;background:linear-gradient(to right,#d4d4d4,#a8a8a8)"></div>
<div class="a" style="left:29px;top:263px;width:830px;height:1px;background:#d4d4d4"></div>
<div class="a" style="left:1px;top:263px;width:27px;height:1px;background:linear-gradient(to right,#d4d4d4,#a8a8a8)"></div>
<div class="a" style="left:29px;top:284px;width:830px;height:1px;background:#d4d4d4"></div>
<div class="a" style="left:1px;top:284px;width:27px;height:1px;background:linear-gradient(to right,#d4d4d4,#a8a8a8)"></div>
<div class="a" style="left:29px;top:305px;width:830px;height:1px;background:#d4d4d4"></div>
<div class="a" style="left:1px;top:305px;width:27px;height:1px;background:linear-gradient(to right,#d4d4d4,#a8a8a8)"></div>
<div class="a" style="left:29px;top:326px;width:830px;height:1px;background:#d4d4d4"></div>
<div class="a" style="left:1px;top:326px;width:27px;height:1px;background:linear-gradient(to right,#d4d4d4,#a8a8a8)"></div>
<div class="a" style="left:29px;top:347px;width:830px;height:1px;background:#d4d4d4"></div>
<div class="a" style="left:1px;top:347px;width:27px;height:1px;background:linear-gradient(to right,#d4d4d4,#a8a8a8)"></div>
<div class="a" style="left:29px;top:368px;width:830px;height:1px;background:#d4d4d4"></div>
<div class="a" style="left:1px;top:368px;width:27px;height:1px;background:linear-gradient(to right,#d4d4d4,#a8a8a8)"></div>
<div class="a" style="left:29px;top:389px;width:830px;height:1px;background:#d4d4d4"></div>
<div class="a" style="left:1px;top:389px;width:27px;height:1px;background:linear-gradient(to right,#d4d4d4,#a8a8a8)"></div>
<div class="a" style="left:29px;top:410px;width:830px;height:1px;background:#d4d4d4"></div>
<div class="a" style="left:1px;top:410px;width:27px;height:1px;background:linear-gradient(to right,#d4d4d4,#a8a8a8)"></div>
<div class="a" style="left:29px;top:431px;width:830px;height:1px;background:#d4d4d4"></div>
<div class="a" style="left:1px;top:431px;width:27px;height:1px;background:linear-gradient(to right,#d4d4d4,#a8a8a8)"></div>
<div class="a" style="left:29px;top:452px;width:830px;height:1px;background:#d4d4d4"></div>
<div class="a" style="left:1px;top:452px;width:27px;height:1px;background:linear-gradient(to right,#d4d4d4,#a8a8a8)"></div>
<div class="a" style="left:29px;top:473px;width:830px;height:1px;background:#d4d4d4"></div>
<div class="a" style="left:1px;top:473px;width:27px;height:1px;background:linear-gradient(to right,#d4d4d4,#a8a8a8)"></div>
<div class="a" style="left:29px;top:494px;width:830px;height:1px;background:#d4d4d4"></div>
<div class="a" style="left:1px;top:494px;width:27px;height:1px;background:linear-gradient(to right,#d4d4d4,#a8a8a8)"></div>
<div class="a" style="left:29px;top:515px;width:830px;height:1px;background:#d4d4d4"></div>
<div class="a" style="left:1px;top:515px;width:27px;height:1px;background:linear-gradient(to right,#d4d4d4,#a8a8a8)"></div>
<div class="a" style="left:1px;top:264px;width:27px;height:20px;background:#d2d2d2"></div>
<div class="a" style="left:28px;top:222px;width:1px;height:285px;background:#ababab"></div>
<div class="a" style="left:27px;top:263px;width:2px;height:22px;background:#217346"></div>
<div class="t" style="left:1px;top:226.0px;width:27px;text-align:center;font-size:14.3px;color:#000">1</div>
<div class="t" style="left:1px;top:247.0px;width:27px;text-align:center;font-size:14.3px;color:#000">2</div>
<div class="t" style="left:1px;top:268.0px;width:27px;text-align:center;font-size:14.3px;color:#107040">3</div>
<div class="t" style="left:1px;top:289.0px;width:27px;text-align:center;font-size:14.3px;color:#000">4</div>
<div class="t" style="left:1px;top:310.0px;width:27px;text-align:center;font-size:14.3px;color:#000">5</div>
<div class="t" style="left:1px;top:331.0px;width:27px;text-align:center;font-size:14.3px;color:#000">6</div>
<div class="t" style="left:1px;top:352.0px;width:27px;text-align:center;font-size:14.3px;color:#000">7</div>
<div class="t" style="left:1px;top:373.0px;width:27px;text-align:center;font-size:14.3px;color:#000">8</div>
<div class="t" style="left:1px;top:394.0px;width:27px;text-align:center;font-size:14.3px;color:#000">9</div>
<div class="t" style="left:1px;top:415.0px;width:27px;text-align:center;font-size:14.3px;color:#000">10</div>
<div class="t" style="left:1px;top:436.0px;width:27px;text-align:center;font-size:14.3px;color:#000">11</div>
<div class="t" style="left:1px;top:457.0px;width:27px;text-align:center;font-size:14.3px;color:#000">12</div>
<div class="t" style="left:1px;top:478.0px;width:27px;text-align:center;font-size:14.3px;color:#000">13</div>
<div class="t" style="left:1px;top:499.0px;width:27px;text-align:center;font-size:14.3px;color:#000">14</div>
<!-- B3 selection -->
<div class="a" style="left:102px;top:265px;width:96px;height:18px;background:#e8eef8"></div>
<div class="a" style="left:99px;top:262px;width:102px;height:24px;border:2px solid #1e6fd0"></div>
<div class="a" style="left:98px;top:261px;width:5px;height:5px;background:#1e6fd0;outline:1px solid #fff"></div>
<div class="a" style="left:197px;top:261px;width:5px;height:5px;background:#1e6fd0;outline:1px solid #fff"></div>
<div class="a" style="left:98px;top:282px;width:5px;height:5px;background:#1e6fd0;outline:1px solid #fff"></div>
<div class="a" style="left:197px;top:282px;width:5px;height:5px;background:#1e6fd0;outline:1px solid #fff"></div>
<div class="t" style="left:189px;top:268px;font-size:14px;color:#000">8</div>
<!-- D3 edit -->
<div class="a" style="left:277px;top:262px;width:76px;height:24px;border:2px solid #217346;background:#fff"></div>
<div class="a" style="left:348px;top:282px;width:5px;height:5px;background:#217346"></div>
<div class="t" style="left:281px;top:268px;font-size:14px;color:#000">=<span style="color:#2f86e0">B3</span>^2</div>
<div class="a" style="left:272px;top:257px;width:85px;height:36px;border:3.4px solid #ff0000;border-radius:8px"></div>
<!-- grid right edge + vscroll -->
<div class="a" style="left:858px;top:221px;width:1px;height:286px;background:#ababab"></div>
<div class="a" style="left:859px;top:201px;width:18px;height:306px;background:#e6e6e6"></div>
<div class="a" style="left:862px;top:217px;width:15px;height:279px;background:#dadada"></div>
<div class="a" style="left:862px;top:203px;width:15px;height:15px;background:#fff;border:1px solid #ababab"></div>
<svg class="a" style="left:865px;top:207px" width="9" height="6" viewBox="0 0 9 6"><path d="M0.5 5 H8.5 L4.5 1Z" fill="#6b6b6b"/></svg>
<div class="a" style="left:862px;top:217px;width:15px;height:179px;background:#fff;border:1px solid #ababab"></div>
<div class="a" style="left:862px;top:492px;width:15px;height:15px;background:#fff;border:1px solid #ababab"></div>
<svg class="a" style="left:865px;top:497px" width="9" height="6" viewBox="0 0 9 6"><path d="M0.5 1 H8.5 L4.5 5Z" fill="#6b6b6b"/></svg>

<!-- SHEET TAB BAR -->
<div class="a" style="left:1px;top:506px;width:876px;height:28px;background:#e6e6e6;border-top:1px solid #ababab"></div>
<svg class="a" style="left:26px;top:515px" width="6" height="9" viewBox="0 0 6 9"><path d="M5 0.5 V8.5 L1 4.5Z" fill="#c0c0c0"/></svg>
<svg class="a" style="left:55px;top:515px" width="6" height="9" viewBox="0 0 6 9"><path d="M1 0.5 V8.5 L5 4.5Z" fill="#c0c0c0"/></svg>
<div class="a" style="left:100px;top:506px;width:107px;height:25px;background:#fff;border-left:1px solid #ababab;border-right:1px solid #ababab"></div>
<div class="a" style="left:100px;top:529px;width:107px;height:2px;background:#1d6b40"></div>
<div class="t" style="left:112px;top:514px;font-size:12.6px;font-weight:700;color:#15683c">microexcel.ru</div>
<svg class="a" style="left:239px;top:512px" width="18" height="17" viewBox="0 0 18 17"><circle cx="9" cy="8.2" r="7" fill="none" stroke="#c0c0c0" stroke-width="1"/><path d="M9 4 V12.4 M4.8 8.2 H13.2" stroke="#c0c0c0" stroke-width="1.4"/></svg>
<div class="a" style="left:528px;top:515px;width:2px;height:2px;background:#a6a6a6"></div>
<div class="a" style="left:528px;top:519px;width:2px;height:2px;background:#a6a6a6"></div>
<div class="a" style="left:528px;top:523px;width:2px;height:2px;background:#a6a6a6"></div>
<div class="a" style="left:814px;top:513px;width:30px;height:15px;background:#dadada"></div>
<div class="a" style="left:559px;top:513px;width:256px;height:15px;background:#fff;border:1px solid #ababab"></div>
<div class="a" style="left:545px;top:513px;width:15px;height:15px;background:#fff;border:1px solid #ababab"></div>
<svg class="a" style="left:549px;top:516px" width="6" height="9" viewBox="0 0 6 9"><path d="M5 0.5 V8.5 L1 4.5Z" fill="#6b6b6b"/></svg>
<div class="a" style="left:846px;top:513px;width:15px;height:15px;background:#fff;border:1px solid #ababab"></div>
<svg class="a" style="left:851px;top:516px" width="6" height="9" viewBox="0 0 6 9"><path d="M1 0.5 V8.5 L5 4.5Z" fill="#6b6b6b"/></svg>

<!-- STATUS BAR -->
<div class="a" style="left:1px;top:534px;width:876px;height:21px;background:#f3f3f3;border-top:1px solid #c6c6c6;border-bottom:1px solid #c6c6c6"></div>
<div class="t" style="left:9px;top:539px;font-size:10.8px;color:#262626">Ввод</div>
<svg class="a" style="left:71px;top:537px" width="16" height="16" viewBox="0 0 16 16">
<circle cx="3.8" cy="3.8" r="2.9" fill="#5f5f5f"/>
<rect x="8.3" y="2.2" width="5.6" height="2.5" fill="#5f5f5f"/>
<path d="M2.7 8.2 V13.4 H13.4 V2.5" fill="none" stroke="#5f5f5f" stroke-width="1.2"/>
<g fill="#5f5f5f"><rect x="6.4" y="7" width="2" height="1.1" rx="0.5"/><rect x="9.4" y="7" width="2" height="1.1" rx="0.5"/>
<rect x="4.4" y="9" width="2" height="1.1" rx="0.5"/><rect x="7.4" y="9" width="2" height="1.1" rx="0.5"/><rect x="10.4" y="9" width="2" height="1.1" rx="0.5"/>
<rect x="4.4" y="11" width="2" height="1.1" rx="0.5"/><rect x="7.4" y="11" width="2" height="1.1" rx="0.5"/><rect x="10.4" y="11" width="2" height="1.1" rx="0.5"/></g>
</svg>
<svg class="a" style="left:592px;top:538px" width="14" height="14" viewBox="0 0 14 14"><path d="M0.5 0.5 H12.5 V12.5 H0.5Z M0.5 4.5 H12.5 M0.5 8.5 H12.5 M4.5 0.5 V12.5 M8.5 0.5 V12.5" fill="none" stroke="#6b6b6b" stroke-width="1"/></svg>
<svg class="a" style="left:630px;top:538px" width="15" height="14" viewBox="0 0 15 14"><path d="M0.5 0.5 H13.5 V12.5 H0.5Z M4.5 2.5 H10.5 V10.5 H4.5Z M6 4.5 H9 M6 6.5 H9 M6 8.5 H9" fill="none" stroke="#6b6b6b" stroke-width="1"/></svg>
<svg class="a" style="left:668px;top:538px" width="15" height="14" viewBox="0 0 15 14"><path d="M0.5 0.5 H13.5 V12.5 H0.5Z M4.5 0.5 V7.5 H13.5 M8.5 0.5 V7.5" fill="none" stroke="#6b6b6b" stroke-width="1"/></svg>
<div class="a" style="left:699px;top:544px;width:6px;height:2px;background:#6b6b6b"></div>
<div class="a" style="left:709px;top:545px;width:100px;height:1px;background:#a6a6a6"></div>
<div class="a" style="left:759px;top:541px;width:1px;height:7px;background:#a6a6a6"></div>
<div class="a" style="left:812px;top:544px;width:8px;height:2px;background:#6b6b6b"></div>
<div class="a" style="left:815px;top:541px;width:2px;height:8px;background:#6b6b6b"></div>
<div class="t" style="left:832px;top:540px;font-size:10.5px;color:#a6a6a6">100 %</div>
<div class="a" style="left:877px;top:0;width:1px;height:555px;background:#c6c6c6"></div>

</body></html>
